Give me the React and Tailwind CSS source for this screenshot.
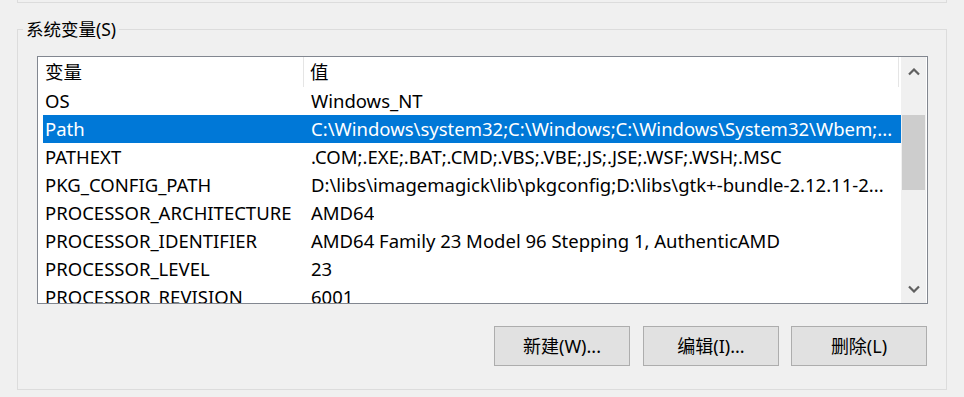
import React from "react";

const rows = [
  ["OS", "Windows_NT"],
  ["Path", "C:\\Windows\\system32;C:\\Windows;C:\\Windows\\System32\\Wbem;..."],
  ["PATHEXT", ".COM;.EXE;.BAT;.CMD;.VBS;.VBE;.JS;.JSE;.WSF;.WSH;.MSC"],
  ["PKG_CONFIG_PATH", "D:\\libs\\imagemagick\\lib\\pkgconfig;D:\\libs\\gtk+-bundle-2.12.11-2..."],
  ["PROCESSOR_ARCHITECTURE", "AMD64"],
  ["PROCESSOR_IDENTIFIER", "AMD64 Family 23 Model 96 Stepping 1, AuthenticAMD"],
  ["PROCESSOR_LEVEL", "23"],
  ["PROCESSOR_REVISION", "6001"],
];

const Chevron = ({ down }) => (
  <svg width="12" height="8" viewBox="0 0 12 8">
    <path
      d={down ? "M1 1.5 L6 6.5 L11 1.5" : "M1 6.5 L6 1.5 L11 6.5"}
      fill="none"
      stroke="#606060"
      strokeWidth="2.2"
    />
  </svg>
);

export default function App() {
  return (
    <div className="w-[964px] h-[397px] overflow-hidden bg-[#f0f0f0] text-black text-[18px] font-['Noto_Sans','Noto_Sans_CJK_SC',sans-serif]">
      {/* bottom of the group above */}
      <div className="ml-[17px] w-[930px] h-[3px] border-x border-b border-[#dcdcdc]" />

      <fieldset className="ml-[17px] mt-[16px] w-[930px] border border-[#dcdcdc] px-[5px] pb-[23px]">
        <legend className="px-[3px] leading-[20px] text-[17.5px]">系统变量(S)</legend>

        {/* list view */}
        <div className="mt-[17px] ml-[14px] w-[891px] h-[248px] border border-[#828790] bg-white flex overflow-hidden text-[18.5px]">
          <div className="flex-1 overflow-hidden">
            <div className="flex h-[30px] items-center">
              <div className="w-[266px] h-full flex items-center pl-[7px] border-r border-[#e5e5e5]">变量</div>
              <div className="w-[595px] h-full flex items-center pl-[6px] border-r border-[#e5e5e5]">值</div>
            </div>
            {rows.map(([name, value], i) => (
              <div
                key={name}
                className={
                  "ml-[5px] h-[28px] flex items-center whitespace-nowrap " +
                  (i === 1 ? "bg-[#0078d7] text-white" : "")
                }
              >
                <div className="w-[262px] pl-[2px] shrink-0">{name}</div>
                <div className="pl-[6px] overflow-hidden">{value}</div>
              </div>
            ))}
          </div>

          {/* scroll bar */}
          <div className="w-[25px] mr-[1px] bg-[#f0f0f0] flex flex-col">
            <div className="h-[30px] flex items-center justify-center">
              <Chevron />
            </div>
            <div className="flex-1 px-[1px]">
              <div className="mt-[28px] h-[75px] bg-[#cdcdcd]" />
            </div>
            <div className="h-[28px] flex items-center justify-center">
              <Chevron down />
            </div>
          </div>
        </div>

        {/* buttons */}
        <div className="mt-[22px] flex justify-end gap-[12px] pr-[14px]">
          {["新建(W)...", "编辑(I)...", "删除(L)"].map((label, i) => (
            <button
              key={label}
              className={
                "w-[136px] h-[40px] border border-[#adadad] bg-[#e1e1e1] flex items-center justify-center " +
                (i === 0 ? "mr-[1px]" : "")
              }
            >
              {label}
            </button>
          ))}
        </div>
      </fieldset>
    </div>
  );
}
